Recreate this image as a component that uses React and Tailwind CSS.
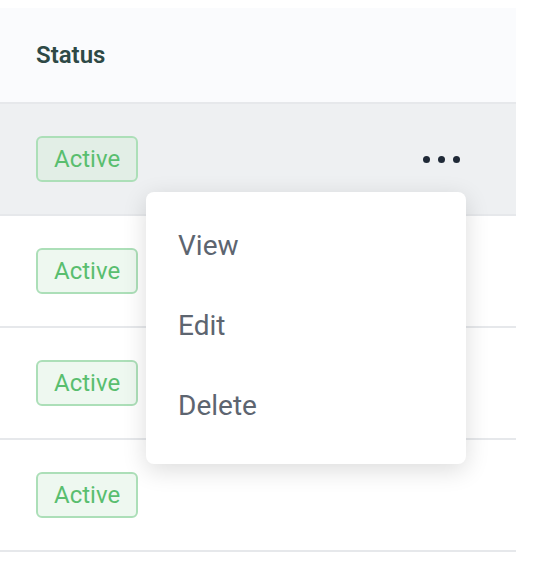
import React from 'react';

const rows = [
  { id: 1, status: 'Active', hovered: true },
  { id: 2, status: 'Active' },
  { id: 3, status: 'Active' },
  { id: 4, status: 'Active' },
];

function StatusBadge({ label, hovered }) {
  return (
    <span
      className={`inline-flex items-center h-[46px] px-[16px] rounded-[6px] border-2 border-[#acdfb8] text-[24px] text-[#59be6f] ${
        hovered ? 'bg-[#e2eee6]' : 'bg-[#eef8f0]'
      }`}
    >
      {label}
    </span>
  );
}

function MoreDots() {
  return (
    <button type="button" className="flex items-center gap-[8px] px-1 py-2">
      <span className="w-[7px] h-[7px] rounded-full bg-[#1f2937]" />
      <span className="w-[7px] h-[7px] rounded-full bg-[#1f2937]" />
      <span className="w-[7px] h-[7px] rounded-full bg-[#1f2937]" />
    </button>
  );
}

export default function App() {
  return (
    <div
      className="relative w-[560px] h-[582px] bg-white pt-2 overflow-hidden"
      style={{ fontFamily: 'Roboto, "Liberation Sans", sans-serif' }}
    >
      <div className="w-[516px]">
        <div className="h-[96px] bg-[#fafbfd] flex items-center pl-9 border-b-2 border-[#e6e8eb]">
          <span className="text-[24px] font-semibold text-[#2e4946]">Status</span>
        </div>

        {rows.map((row) => (
          <div
            key={row.id}
            className={`h-[112px] flex items-center justify-between pl-9 pr-[52px] border-b-2 border-[#e6e8eb] ${
              row.hovered ? 'bg-[#eef0f2]' : 'bg-white'
            }`}
          >
            <StatusBadge label={row.status} hovered={row.hovered} />
            {row.hovered && <MoreDots />}
          </div>
        ))}
      </div>

      {/* dropdown for the hovered row */}
      <div className="absolute left-[146px] top-[192px] w-[320px] bg-white rounded-[8px] shadow-[0_6px_24px_rgba(0,0,0,0.14)] pt-[14px] pb-[18px]">
        {['View', 'Edit', 'Delete'].map((item) => (
          <div key={item} className="h-[80px] flex items-center px-8 text-[28px] text-[#5d6570]">
            {item}
          </div>
        ))}
      </div>
    </div>
  );
}
